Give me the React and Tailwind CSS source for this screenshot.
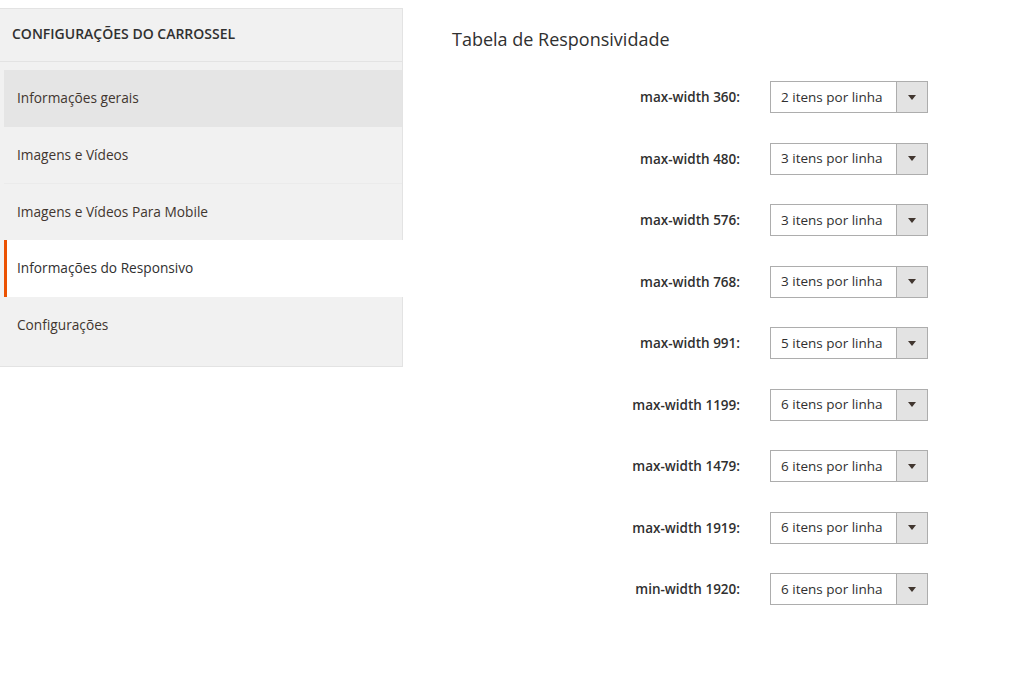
const navItems = [
  { label: "Informações gerais", hover: true },
  { label: "Imagens e Vídeos", line: true },
  { label: "Imagens e Vídeos Para Mobile" },
  { label: "Informações do Responsivo", active: true },
  { label: "Configurações" },
];

const rows = [
  ["max-width 360:", "2 itens por linha"],
  ["max-width 480:", "3 itens por linha"],
  ["max-width 576:", "3 itens por linha"],
  ["max-width 768:", "3 itens por linha"],
  ["max-width 991:", "5 itens por linha"],
  ["max-width 1199:", "6 itens por linha"],
  ["max-width 1479:", "6 itens por linha"],
  ["max-width 1919:", "6 itens por linha"],
  ["min-width 1920:", "6 itens por linha"],
];

function SelectBox({ value }) {
  return (
    <div className="flex h-[32px] w-[158px] border border-[#adadad] bg-white">
      <div className="flex flex-1 items-center pl-[10px] text-[13.5px] text-[#303030]">
        {value}
      </div>
      <div className="flex w-[31px] items-center justify-center border-l border-[#adadad] bg-[#e3e3e3]">
        <svg width="8" height="5" viewBox="0 0 8 5">
          <path d="M0 0 L8 0 L4 5 Z" fill="#41362f" />
        </svg>
      </div>
    </div>
  );
}

export default function App() {
  return (
    <div
      className="flex min-h-[675px] w-[1024px] bg-white text-[#303030]"
      style={{ fontFamily: '"Open Sans", sans-serif' }}
    >
      <div className="w-[403px] shrink-0 pt-2">
        <div className="border-y border-r border-[#e3e3e3] bg-[#f1f1f1] pb-[13px]">
          <div className="flex h-[53px] items-center border-b border-[#e3e3e3] pb-1 pl-3 text-[14px] font-semibold text-[#303030]">
            CONFIGURAÇÕES DO CARROSSEL
          </div>
          <div className="pl-1 pt-2">
            {navItems.map((item) => (
              <div
                key={item.label}
                className={
                  item.active
                    ? "relative -mr-px flex h-[57px] items-center border-l-[3px] border-[#eb5202] bg-white pl-[10px] text-[13.7px] text-[#303030]"
                    : item.hover
                    ? "flex h-[57px] items-center bg-[#e5e5e5] pl-[13px] text-[13.7px] text-[#41362f]"
                    : item.line
                    ? "flex h-[57px] items-center border-b border-[#ebebeb] pl-[13px] text-[13.7px] text-[#41362f]"
                    : "flex h-[56px] items-center pl-[13px] text-[13.7px] text-[#41362f]"
                }
              >
                {item.label}
              </div>
            ))}
          </div>
        </div>
      </div>

      <div className="flex-1 pl-[49px] pt-[28px]">
        <h2 className="text-[18px] leading-[22px] text-[#303030]">
          Tabela de Responsividade
        </h2>
        <div className="mt-[31px] flex flex-col gap-[29.5px]">
          {rows.map(([label, value]) => (
            <div key={label} className="flex items-center">
              <div className="w-[288px] pt-px text-right text-[13.5px] font-semibold text-[#303030]">
                {label}
              </div>
              <div className="ml-[30px]">
                <SelectBox value={value} />
              </div>
            </div>
          ))}
        </div>
      </div>
    </div>
  );
}
